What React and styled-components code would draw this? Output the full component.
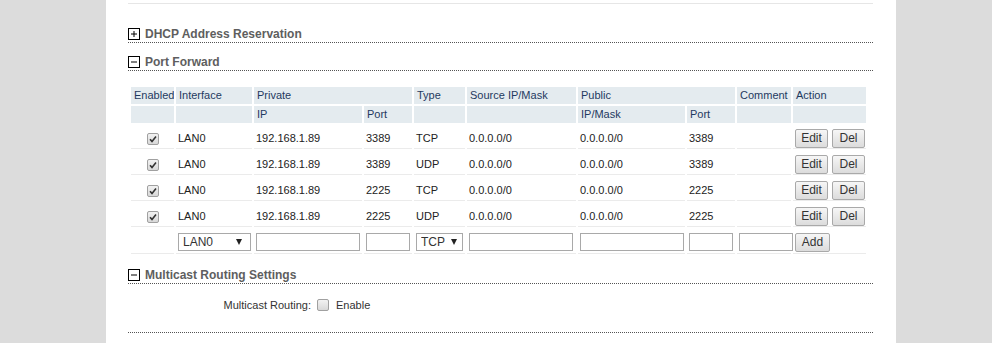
import React from 'react'
import styled, { createGlobalStyle } from 'styled-components'

const GlobalStyle = createGlobalStyle`
  body {
    margin: 0;
    background: #dcdcdc;
    font-family: "Liberation Sans", Arial, sans-serif;
  }
`

const Panel = styled.div`
  margin-left: 106px;
  width: 790px;
  min-height: 343px;
  background: #fff;
  padding: 3px 23px 0 22px;
  box-sizing: border-box;
`

const TopRule = styled.div`
  border-top: 1px solid #e6e6e6;
`

const SectionHead = styled.div`
  display: flex;
  align-items: center;
  gap: 5px;
  margin-top: ${(props) => props.top}px;
  height: 14px;
  line-height: 14px;
  padding-bottom: 1px;
  border-bottom: 1px dotted #555;
  font-size: 12px;
  font-weight: bold;
  color: #5e5e5e;
`

const Divider = styled.div`
  margin-top: ${(props) => props.top}px;
  border-bottom: 1px dotted #555;
`

function ToggleIcon({ open }) {
  return (
    <svg width="12" height="12" viewBox="0 0 12 12">
      <rect x="0.5" y="0.5" width="11" height="11" fill="#fff" stroke="#000" />
      <line x1="3" y1="6" x2="9" y2="6" stroke="#000" />
      {!open && <line x1="6" y1="3" x2="6" y2="9" stroke="#000" />}
    </svg>
  )
}

const Table = styled.table`
  margin: 14px 0 0 1px;
  width: 739px;
  table-layout: fixed;
  border-collapse: separate;
  border-spacing: 2px;
  font-size: 11px;
`

const Th = styled.th`
  height: 17px;
  padding: 0 3px;
  line-height: 17px;
  background: #e4ebef;
  color: #1f3a5f;
  font-weight: normal;
  text-align: left;
  white-space: nowrap;
  overflow: hidden;
`

const Td = styled.td`
  height: 19px;
  padding: 4px 2px 0;
  line-height: 19px;
  vertical-align: top;
  border-bottom: 1px solid #ebebeb;
  color: #222;
  text-align: ${(props) => (props.center ? 'center' : 'left')};
  white-space: nowrap;
`

const InputTd = styled.td`
  height: 18px;
  padding: 4px 2px 1px;
  line-height: 18px;
  vertical-align: top;
  border-bottom: 1px solid #ebebeb;
  white-space: nowrap;
`

const CheckBox = styled.span`
  display: inline-block;
  vertical-align: top;
  width: 12px;
  height: 12px;
  box-sizing: border-box;
  border: 1px solid #a0a0a0;
  border-radius: 2px;
  background: linear-gradient(#f2f2f2, #d8d8d8);
  position: relative;
  top: ${(props) => (props.inRow ? 4 : 0)}px;
`

const Button = styled.button`
  width: ${(props) => props.w}px;
  height: 19px;
  padding: 0;
  margin-right: ${(props) => (props.gap ? 4 : 0)}px;
  box-sizing: border-box;
  border: 1px solid #a9a9a9;
  border-radius: 2px;
  background: linear-gradient(#f6f6f6, #dcdcdc);
  font-family: "Liberation Sans", Arial, sans-serif;
  font-size: 12px;
  color: #333;
  line-height: 17px;
  vertical-align: top;
`

const TextInput = styled.input`
  width: ${(props) => props.w}px;
  height: 18px;
  box-sizing: border-box;
  border: 1px solid #a9a9a9;
  padding: 0 3px;
  vertical-align: top;
`

const SelectWrap = styled.span`
  position: relative;
  display: inline-block;
  vertical-align: top;
  height: 18px;
`

const Select = styled.select`
  display: block;
  appearance: none;
  width: ${(props) => props.w}px;
  height: 18px;
  box-sizing: border-box;
  border: 1px solid #a9a9a9;
  border-radius: 0;
  background: #fff;
  padding: 0 0 0 4px;
  font-family: "Liberation Sans", Arial, sans-serif;
  font-size: 12px;
  color: #333;
`

const Arrow = styled.span`
  position: absolute;
  right: ${(props) => props.r}px;
  top: 6px;
  width: 0;
  height: 0;
  border-left: 3.5px solid transparent;
  border-right: 3.5px solid transparent;
  border-top: 6px solid #222;
  pointer-events: none;
`

const FormRow = styled.div`
  display: grid;
  grid-template-columns: 183px 12px auto;
  column-gap: 6px;
  align-items: center;
  margin-top: 14px;
  height: 14px;
  font-size: 11px;
  color: #333;
`

const Label = styled.span`
  text-align: right;
`

const EnableLabel = styled.span`
  margin-left: 1px;
`

const rules = [
  ['3389', 'TCP'],
  ['3389', 'UDP'],
  ['2225', 'TCP'],
  ['2225', 'UDP'],
]

const widths = [43, 76, 108, 48, 51, 109, 107, 48, 54, 73]

function Check() {
  return (
    <CheckBox inRow>
      <svg width="10" height="10" viewBox="0 0 10 10" style={{ position: 'absolute', left: 0, top: 0 }}>
        <path d="M2 5.2 L4 7.4 L8 2.4" fill="none" stroke="#333" strokeWidth="1.6" />
      </svg>
    </CheckBox>
  )
}

export default function App() {
  return (
    <>
      <GlobalStyle />
      <Panel>
        <TopRule />
        <SectionHead top={23}>
          <ToggleIcon />
          DHCP Address Reservation
        </SectionHead>
        <SectionHead top={12}>
          <ToggleIcon open />
          Port Forward
        </SectionHead>

        <Table>
          <colgroup>
            {widths.map((w, i) => (
              <col key={i} style={{ width: w }} />
            ))}
          </colgroup>
          <thead>
            <tr>
              <Th>Enabled</Th>
              <Th>Interface</Th>
              <Th colSpan={2}>Private</Th>
              <Th>Type</Th>
              <Th>Source IP/Mask</Th>
              <Th colSpan={2}>Public</Th>
              <Th>Comment</Th>
              <Th>Action</Th>
            </tr>
            <tr>
              <Th />
              <Th />
              <Th>IP</Th>
              <Th>Port</Th>
              <Th />
              <Th />
              <Th>IP/Mask</Th>
              <Th>Port</Th>
              <Th />
              <Th />
            </tr>
          </thead>
          <tbody>
            {rules.map(([port, type], i) => (
              <tr key={i}>
                <Td center>
                  <Check />
                </Td>
                <Td>LAN0</Td>
                <Td>192.168.1.89</Td>
                <Td>{port}</Td>
                <Td>{type}</Td>
                <Td>0.0.0.0/0</Td>
                <Td>0.0.0.0/0</Td>
                <Td>{port}</Td>
                <Td />
                <Td>
                  <Button w={33} gap>Edit</Button>
                  <Button w={33}>Del</Button>
                </Td>
              </tr>
            ))}
            <tr>
              <InputTd />
              <InputTd>
                <SelectWrap>
                  <Select w={73} defaultValue="LAN0">
                    <option>LAN0</option>
                  </Select>
                  <Arrow r={9} />
                </SelectWrap>
              </InputTd>
              <InputTd>
                <TextInput w={104} />
              </InputTd>
              <InputTd>
                <TextInput w={44} />
              </InputTd>
              <InputTd>
                <SelectWrap>
                  <Select w={47} defaultValue="TCP">
                    <option>TCP</option>
                    <option>UDP</option>
                  </Select>
                  <Arrow r={6} />
                </SelectWrap>
              </InputTd>
              <InputTd>
                <TextInput w={104} />
              </InputTd>
              <InputTd>
                <TextInput w={104} />
              </InputTd>
              <InputTd>
                <TextInput w={44} />
              </InputTd>
              <InputTd>
                <TextInput w={54} />
              </InputTd>
              <InputTd>
                <Button w={35}>Add</Button>
              </InputTd>
            </tr>
          </tbody>
        </Table>

        <SectionHead top={12}>
          <ToggleIcon open />
          Multicast Routing Settings
        </SectionHead>
        <FormRow>
          <Label>Multicast Routing:</Label>
          <CheckBox />
          <EnableLabel>Enable</EnableLabel>
        </FormRow>
        <Divider top={20} />
      </Panel>
    </>
  )
}
